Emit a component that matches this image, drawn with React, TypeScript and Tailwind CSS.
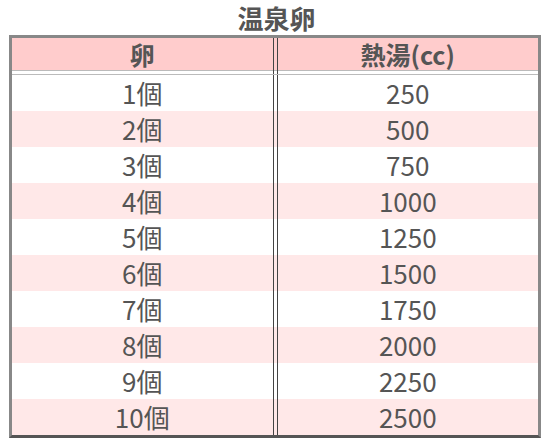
const rows = [
  ['1個', '250'],
  ['2個', '500'],
  ['3個', '750'],
  ['4個', '1000'],
  ['5個', '1250'],
  ['6個', '1500'],
  ['7個', '1750'],
  ['8個', '2000'],
  ['9個', '2250'],
  ['10個', '2500'],
];

export default function App() {
  return (
    <div className="w-[551px] bg-white text-[#555] font-['Noto_Sans_CJK_JP','Noto_Sans',sans-serif]">
      <h1 className="flex h-[35px] items-center justify-center pl-[2px] text-[26px] font-bold leading-[30px]">温泉卵</h1>
      <div className="ml-[9px] w-[532px] border-[3px] border-[#888] border-b-[#555]">
        <div className="grid h-[37px] grid-cols-2 gap-x-[3px] border-b border-b-[#bbb] bg-[#ffcccc] text-[25px] font-bold leading-none shadow-[inset_0_-3px_0_#fff,inset_0_-4px_0_#bbb]">
          <div className="flex items-center justify-center border-r border-r-[#444] pb-[4px]">卵</div>
          <div className="flex items-center justify-center border-l border-l-[#444] pb-[4px]">熱湯(cc)</div>
        </div>
        {rows.map(([egg, water], i) => (
          <div key={egg} className={`grid h-[36px] grid-cols-2 gap-x-[3px] text-[26px] leading-none ${i % 2 ? 'bg-[#ffe8e8]' : 'bg-white'}`}>
            <div className="flex items-center justify-center border-r border-r-[#444]">{egg}</div>
            <div className="flex items-center justify-center border-l border-l-[#444]">{water}</div>
          </div>
        ))}
      </div>
    </div>
  );
}
